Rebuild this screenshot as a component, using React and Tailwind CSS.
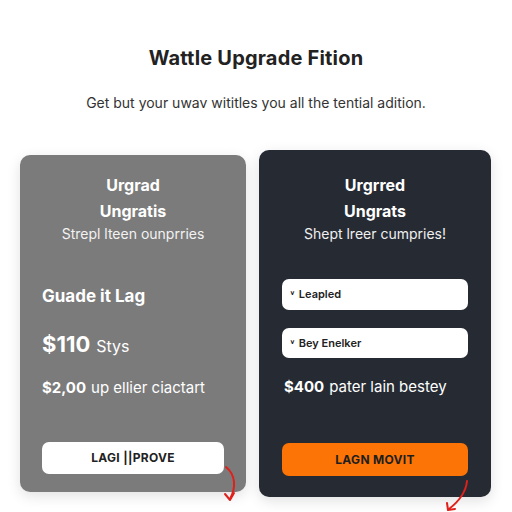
export default function App() {
  return (
    <div
      className="relative w-[512px] h-[512px] overflow-hidden bg-white"
      style={{ fontFamily: 'Inter, "Open Sans", Arial, sans-serif' }}
    >
      <h1 className="pt-[46px] text-center text-[20px] leading-[24px] font-bold tracking-[0.2px] text-[#222]">
        Wattle Upgrade Fition
      </h1>
      <p className="mt-[23px] text-center text-[14px] leading-[20px] text-[#333]">
        Get but your uwav wititles you all the tential adition.
      </p>

      <div className="mt-[37px] flex items-start gap-[13px] px-[20px]">
        {/* left card */}
        <div className="mt-[5px] flex h-[337px] w-[226px] flex-col rounded-[10px] bg-[#7b7b7b] px-[22px] pt-[19px] text-white shadow-[0_4px_14px_rgba(0,0,0,0.12)]">
          <div className="text-center text-[16px] leading-[22px] font-bold">Urgrad</div>
          <div className="mt-[4px] text-center text-[16px] leading-[22px] font-bold">Ungratis</div>
          <div className="mt-[2px] text-center text-[14px] leading-[20px] text-[#f2f2f2]">Strepl lteen ounprries</div>
          <div className="mt-[41px] text-[17px] leading-[22px] font-bold">Guade it Lag</div>
          <div className="mt-[23px] flex items-baseline gap-[6px]">
            <span className="text-[22px] leading-[28px] font-bold">$110</span>
            <span className="text-[16px]">Stys</span>
          </div>
          <div className="mt-[20px] flex items-baseline gap-[5px] text-[15px] leading-[20px]">
            <span className="font-bold">$2,00</span>
            <span>up ellier ciactart</span>
          </div>
          <button className="mt-[44px] h-[32px] w-full rounded-[7px] bg-white text-[12px] font-bold tracking-wide text-[#222]">
            LAGI ||PROVE
          </button>
        </div>

        {/* right card */}
        <div className="flex h-[347px] w-[232px] flex-col rounded-[10px] bg-[#262b33] px-[23px] pt-[24px] text-white shadow-[0_4px_14px_rgba(0,0,0,0.12)]">
          <div className="text-center text-[16px] leading-[22px] font-bold">Urgrred</div>
          <div className="mt-[4px] text-center text-[16px] leading-[22px] font-bold">Ungrats</div>
          <div className="mt-[2px] text-center text-[14px] leading-[20px] text-[#f0f0f0]">Shept lreer cumpries!</div>
          <div className="mt-[35px] flex h-[31px] items-center rounded-[7px] bg-white px-[8px] text-[11px] font-semibold text-[#222]">
            <span className="mr-[4px] text-[10px] font-bold">&#709;</span>Leapled
          </div>
          <div className="mt-[18px] flex h-[30px] items-center rounded-[7px] bg-white px-[8px] text-[11px] font-semibold text-[#222]">
            <span className="mr-[4px] text-[10px] font-bold">&#709;</span>Bey Enelker
          </div>
          <div className="mt-[19px] flex items-baseline gap-[5px] pl-[2px] text-[15px] leading-[20px]">
            <span className="font-bold">$400</span>
            <span>pater lain bestey</span>
          </div>
          <button className="mt-[46px] h-[33px] w-full rounded-[7px] bg-[#fb7405] text-[12px] font-bold tracking-wide text-[#1e1e1e]">
            LAGN MOVIT
          </button>
        </div>
      </div>

      {/* red arrows */}
      <svg className="absolute left-0 top-0" width="512" height="512" viewBox="0 0 512 512" fill="none">
        <path d="M226 467 C236 475 236 488 230 499" stroke="#e0201a" strokeWidth="2" strokeLinecap="round" />
        <path d="M225 494 L230 500 L234 493" stroke="#e0201a" strokeWidth="2" strokeLinecap="round" strokeLinejoin="round" />
        <path d="M467 481 C466 492 458 502 449 509" stroke="#e0201a" strokeWidth="2" strokeLinecap="round" />
        <path d="M447 503 L448 510 L455 509" stroke="#e0201a" strokeWidth="2" strokeLinecap="round" strokeLinejoin="round" />
      </svg>
    </div>
  );
}
